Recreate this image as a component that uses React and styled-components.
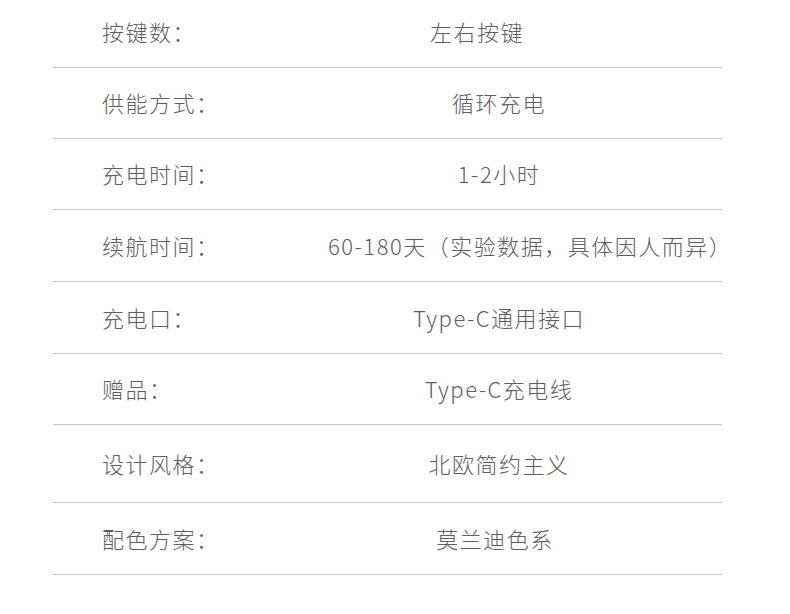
import styled, { createGlobalStyle } from 'styled-components';

const specs = [
  { label: '按键数：', value: '左右按键', h: 67, shift: -44, lift: 6 },
  { label: '供能方式：', value: '循环充电', h: 70 },
  { label: '充电时间：', value: '1-2小时', h: 70 },
  { label: '续航时间：', value: '60-180天（实验数据，具体因人而异）', h: 71, shift: 52 },
  { label: '充电口：', value: 'Type-C通用接口', h: 71 },
  { label: '赠品：', value: 'Type-C充电线', h: 70 },
  { label: '设计风格：', value: '北欧简约主义', h: 77 },
  { label: '配色方案：', value: '莫兰迪色系', h: 71, shift: -8 },
]

const App = () => {
  return (
    <Page>
      <GlobalStyle />
      <Table>
        {specs.map((s, i) => (
          <Row key={i} $h={s.h} $lift={s.lift || 2}>
            <Label>{s.label}</Label>
            <Value $shift={s.shift || 0}>{s.value}</Value>
          </Row>
        ))}
      </Table>
    </Page>
  )
}

export default App

const GlobalStyle = createGlobalStyle`
  html, body {
    margin: 0;
    padding: 0;
    background: #ffffff;
  }
  body {
    font-family: "Noto Sans CJK SC", "Noto Sans", sans-serif;
  }
`

const Page = styled.div`
  width: 790px;
  height: 614px;
  background: #ffffff;
  padding-left: 53px;
  box-sizing: border-box;
  overflow: hidden;
`

const Table = styled.div`
  width: 669px;
  display: flex;
  flex-direction: column;
`

const Row = styled.div`
  height: ${p => p.$h}px;
  box-sizing: content-box;
  display: grid;
  grid-template-columns: 223px 1fr;
  align-items: center;
  padding-bottom: 0;
  border-bottom: 1px solid #c4c4c4;
  font-size: 22px;
  font-weight: 300;
  letter-spacing: 1.5px;
  color: #5e5e5e;
  white-space: nowrap;
  & > * {
    margin-bottom: ${p => p.$lift}px;
  }
`

const Label = styled.span`
  padding-left: 49px;
`

const Value = styled.div`
  display: flex;
  justify-content: center;
  margin-left: ${p => p.$shift}px;
`
